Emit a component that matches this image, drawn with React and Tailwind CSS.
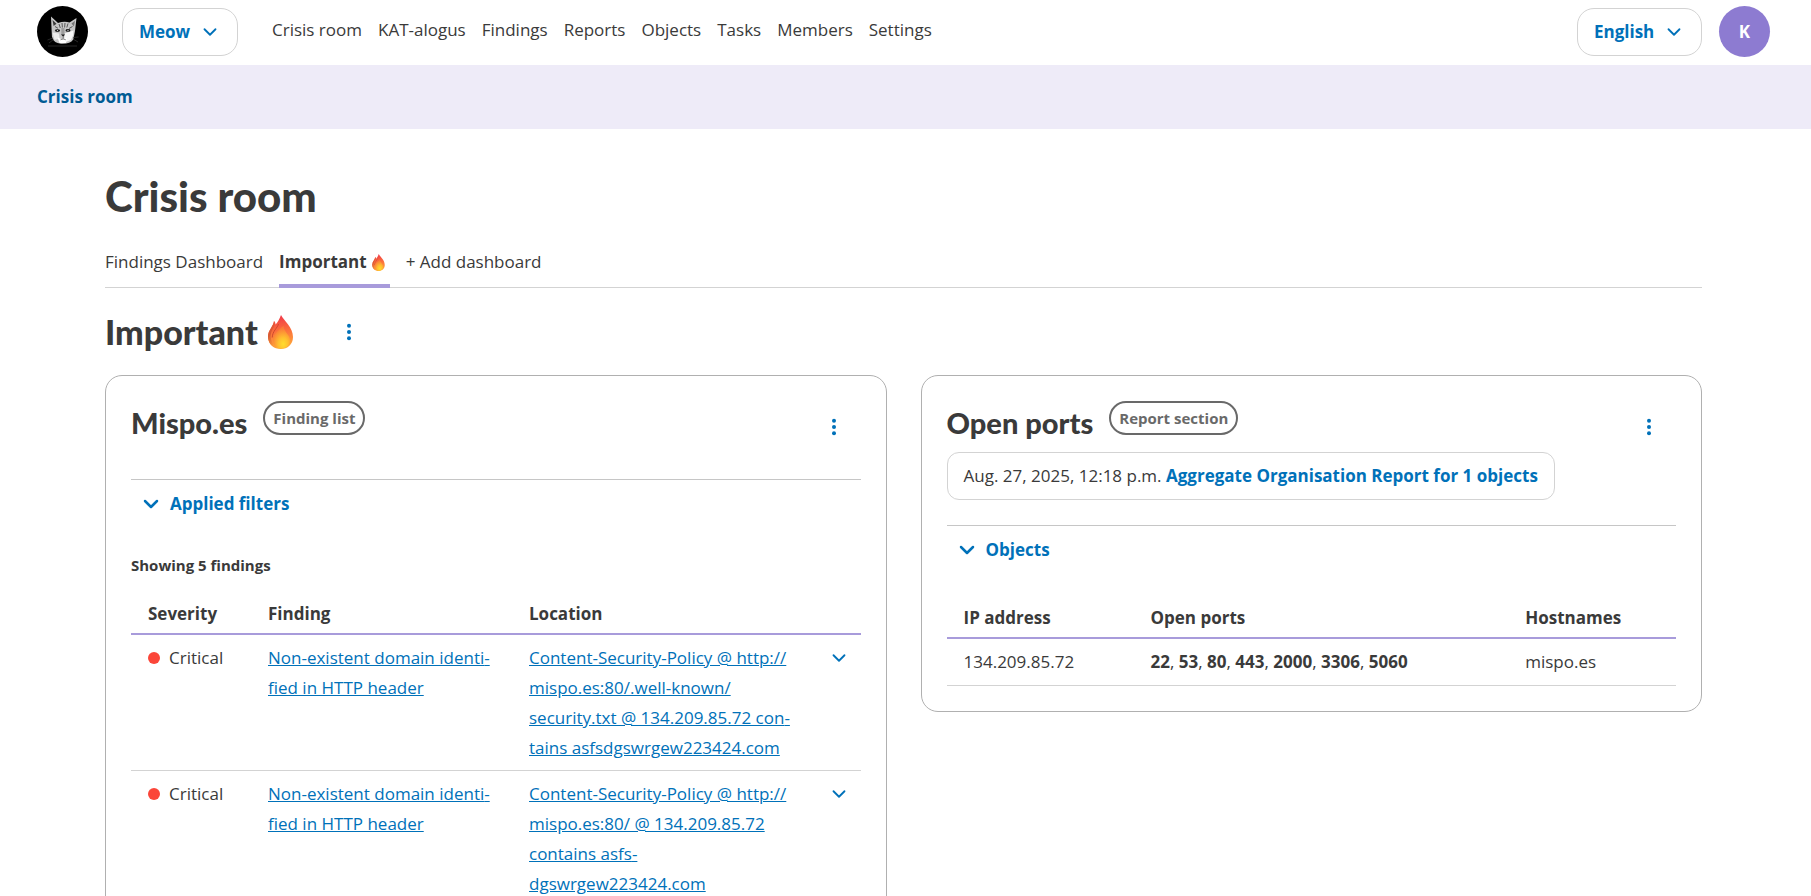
import { Fragment, useState } from "react";
import { ChevronDown } from "lucide-react";

const NAV_ITEMS = [
  "Crisis room",
  "KAT-alogus",
  "Findings",
  "Reports",
  "Objects",
  "Tasks",
  "Members",
  "Settings",
];

// \u00AD marks the places where long words may be hyphenated,
// locations are split where a URL may wrap
const FINDINGS = [
  {
    id: 1,
    severity: "Critical",
    finding: "Non-existent domain identi\u00ADfied in HTTP header",
    location: [
      "Content-Security-Policy @ http://",
      "mispo.es:80/.well-known/",
      "security.txt @ 134.209.85.72 con\u00ADtains asfs\u00ADdgswrgew223424.com",
    ],
  },
  {
    id: 2,
    severity: "Critical",
    finding: "Non-existent domain identi\u00ADfied in HTTP header",
    location: [
      "Content-Security-Policy @ http://",
      "mispo.es:80/ @ 134.209.85.72 con\u00ADtains asfs\u00ADdgswrgew223424.com",
    ],
  },
];

const HOSTS = [
  {
    ip: "134.209.85.72",
    ports: [22, 53, 80, 443, 2000, 3306, 5060],
    hostname: "mispo.es",
  },
];

function CatLogo() {
  return (
    <svg viewBox="0 0 51 51" className="size-[51px]" role="img" aria-label="Meow">
      <circle cx="25.5" cy="25.5" r="25.5" fill="#000" />
      {/* Head and ears */}
      <path
        d="M14 10.5 L14.6 24 L15 31 Q16.500 37 24 37.800 Q33 38.200 36.300 33.500 L38 25 L39.500 12 L32.500 16.500 Q27 15 21 17 Z"
        fill="#c6c6c6"
      />
      <path d="M15.500 14 L16.600 20 L19.500 17.800 Z" fill="#3a3a3a" />
      <path d="M38 14.800 L34.500 17.600 L36.900 20.500 Z" fill="#777" />
      {/* Forehead stripes */}
      <path
        d="M22 18 L23.300 22 M25 17 L25.400 21.500 M28 17 L27.600 21.500 M31 17.500 L29.800 21.500 M18 20.500 L21 22.300 M35.500 20.500 L32 22.500"
        stroke="#4a4a4a"
        strokeWidth="0.9"
        fill="none"
      />
      {/* Cheeks and muzzle */}
      <path d="M27.500 27.500 L36.500 24.500 L36.300 29 L34 34 L27 36.500 Z" fill="#f7f7f7" />
      <path d="M15.500 26.500 L22 27.500 L22.500 32.500 L17.500 34 Z" fill="#ececec" />
      <path d="M20.500 31.500 L25.500 33.500 L30 31.500 L29 37 L22.500 37 Z" fill="#fff" />
      <path d="M24.300 22 L27.500 22 L27.500 29 L24.300 29 Z" fill="#9c9c9c" />
      {/* Eyes, nose and mouth */}
      <ellipse cx="20.500" cy="24.600" rx="2.600" ry="1.400" fill="#161616" />
      <ellipse cx="31" cy="24.400" rx="2.500" ry="1.300" fill="#161616" />
      <circle cx="20.500" cy="24.600" r="0.700" fill="#ddd" />
      <circle cx="31" cy="24.400" r="0.600" fill="#ddd" />
      <path d="M24 28.500 L28 28.500 L26.200 30.700 Z" fill="#1c1c1c" />
      <path d="M26.200 30.500 V32.200 M23.500 33.800 Q26 32 28.800 33.800" stroke="#555" strokeWidth="0.7" fill="none" />
      {/* Whiskers */}
      <path
        d="M16 32 L10.500 34 M16.500 33.500 L12 37 M36 31.500 L41.500 31 M36 33 L41 36 M11 40 H40"
        stroke="#3a3a3a"
        strokeWidth="0.7"
        fill="none"
      />
    </svg>
  );
}

function Flame({ className, id }) {
  return (
    <svg viewBox="0 0 25 34" className={className} aria-hidden="true">
      <defs>
        <linearGradient id={`${id}-outer`} x1="0.5" y1="0" x2="0.6" y2="1">
          <stop offset="0" stopColor="#f0384a" />
          <stop offset="0.45" stopColor="#fb6d3c" />
          <stop offset="1" stopColor="#ffb03a" />
        </linearGradient>
        <linearGradient id={`${id}-side`} x1="0" y1="0" x2="0.4" y2="1">
          <stop offset="0" stopColor="#f4503c" />
          <stop offset="0.5" stopColor="#d65a33" />
          <stop offset="1" stopColor="#ff9a3a" />
        </linearGradient>
        <radialGradient id={`${id}-inner`} cx="0.6" cy="0.8" r="0.7">
          <stop offset="0" stopColor="#ffdc2e" />
          <stop offset="0.4" stopColor="#ffc02f" />
          <stop offset="1" stopColor="#fb7a38" />
        </radialGradient>
      </defs>
      <path
        d="M6 6 C7 7 7.500 8 7.600 9.500 C10 7 11.500 4 13 0 C16 6 25 12 25 22 C25 29.500 19.500 34 12.800 34 C6 34 0 29.500 0 21.500 C0 15 5.500 11.500 6 6 Z"
        fill={`url(#${id}-outer)`}
      />
      <path
        d="M6 6 C7 8 6.500 10 5.500 12.500 C3 17 1.500 21 4 27 C5 29.500 6.500 31.500 8.500 33 C3.500 31.500 0 27.500 0 21.500 C0 15 5.500 11.500 6 6 Z"
        fill={`url(#${id}-side)`}
      />
      <path
        d="M15.500 11 C11 14.500 5 19 5 25.500 C5 30.500 8.500 33.500 13 33.500 C18.500 33.500 22 30 22 25 C22 20 16 17 15.500 11 Z"
        fill={`url(#${id}-inner)`}
      />
      <path d="M10.500 9 C9.500 13 4.500 16 4.200 22.500" stroke="#c8452c" strokeWidth="0.9" fill="none" />
    </svg>
  );
}

function MenuButton({ label }) {
  return (
    <button type="button" aria-label={label} className="text-[#0071b9] cursor-pointer">
      <svg viewBox="0 0 22 22" className="size-[22px]" fill="currentColor">
        <circle cx="11" cy="4.7" r="2" />
        <circle cx="11" cy="11" r="2" />
        <circle cx="11" cy="17.3" r="2" />
      </svg>
    </button>
  );
}

function HeaderSelect({ label, value }) {
  return (
    <div className="relative">
      <select
        aria-label={label}
        defaultValue={value}
        className="block h-12 appearance-none rounded-[17px] border border-[#d3d3d3] bg-white pl-4 pr-[46px] font-bold text-[#0071b9]"
      >
        <option>{value}</option>
      </select>
      <ChevronDown
        size={22}
        className="pointer-events-none absolute right-[17px] top-[13px] text-[#0071b9]"
      />
    </div>
  );
}

function Badge({ children }) {
  return (
    <span className="flex h-[34px] items-center rounded-full border-2 border-[#696969] px-2 text-[15px] font-bold text-[#696969]">
      {children}
    </span>
  );
}

function CardHeader({ title, badge }) {
  return (
    <div className="flex h-[51px] items-start">
      <h3 className="font-[Lato,sans-serif] text-[29px] leading-[44px] font-black">{title}</h3>
      <div className="ml-4">
        <Badge>{badge}</Badge>
      </div>
      <div className="ml-auto mr-4 mt-[15px]">
        <MenuButton label={`${title} menu`} />
      </div>
    </div>
  );
}

function Disclosure({ children }) {
  const [open, setOpen] = useState(false);
  return (
    <button
      type="button"
      aria-expanded={open}
      onClick={() => setOpen(!open)}
      className="flex h-12 w-full items-center gap-[7px] pl-2 font-bold text-[#0071b9] cursor-pointer"
    >
      <ChevronDown size={24} strokeWidth={2.5} className={open ? "rotate-180" : ""} />
      {children}
    </button>
  );
}

function FindingsTable() {
  return (
    <table className="mt-[9px] w-full table-fixed text-left">
      <thead>
        <tr className="border-b-2 border-[#a89bdb]">
          <th className="w-[120px] px-[17px] pt-3 pb-1">Severity</th>
          <th className="w-[261px] px-[17px] pt-3 pb-1">Finding</th>
          <th className="pt-3 pr-2 pb-1 pl-[17px]">Location</th>
          <th className="w-[56px]" aria-label="Details" />
        </tr>
      </thead>
      <tbody>
        {FINDINGS.map((row) => (
          <tr key={row.id} className="border-b border-[#d3d3d3] align-top">
            <td className="pt-2 pb-[7px] pl-[17px]">
              <span className="flex items-center gap-[9px]">
                <span className="size-3 rounded-full bg-[#fb4639]" />
                {row.severity}
              </span>
            </td>
            <td className="px-[17px] pt-2 pb-[7px]">
              <a href="#finding" className="text-[#0071b9] underline">
                {row.finding}
              </a>
            </td>
            <td className="pt-2 pr-2 pb-[7px] pl-[17px]">
              <a href="#location" className="text-[#0071b9] underline">
                {row.location.map((part) => (
                  <Fragment key={part}>
                    {part}
                    <wbr />
                  </Fragment>
                ))}
              </a>
            </td>
            <td className="pt-2 pr-[11px] pb-[7px]">
              <button
                type="button"
                aria-label="Show details"
                className="ml-auto flex h-[30px] items-center text-[#0071b9] cursor-pointer"
              >
                <ChevronDown size={22} />
              </button>
            </td>
          </tr>
        ))}
      </tbody>
    </table>
  );
}

function PortsTable() {
  return (
    <table className="mt-[17px] w-full table-fixed text-left">
      <thead>
        <tr className="border-b-2 border-[#a89bdb]">
          <th className="w-[187px] px-[17px] pt-3 pb-1">IP address</th>
          <th className="px-[17px] pt-3 pb-1">Open ports</th>
          <th className="w-[23%] px-[17px] pt-3 pb-1">Hostnames</th>
        </tr>
      </thead>
      <tbody>
        {HOSTS.map((host) => (
          <tr key={host.ip} className="border-b border-[#d3d3d3]">
            <td className="px-[17px] py-2">{host.ip}</td>
            <td className="px-[17px] py-2">
              {host.ports.map((port, i) => (
                <span key={port}>
                  {i > 0 && ", "}
                  <b>{port}</b>
                </span>
              ))}
            </td>
            <td className="px-[17px] py-2">{host.hostname}</td>
          </tr>
        ))}
      </tbody>
    </table>
  );
}

export default function App() {
  return (
    <div className="h-screen overflow-hidden bg-white font-['Open_Sans',sans-serif] text-[17px] leading-[30px] text-[#3a3a3a]">
      {/* Top bar */}
      <header className="flex items-center pt-1.5 pr-[41px] pb-2 pl-[37px]">
        <a href="#home">
          <CatLogo />
        </a>
        <div className="ml-[34px]">
          <HeaderSelect label="Organisation" value="Meow" />
        </div>
        <nav className="mb-1 ml-[34px] flex gap-4">
          {NAV_ITEMS.map((item) => (
            <a key={item} href="#nav">
              {item}
            </a>
          ))}
        </nav>
        <div className="ml-auto flex items-center gap-[17px]">
          <HeaderSelect label="Language" value="English" />
          <button
            type="button"
            className="size-[51px] rounded-full bg-[#8d7bd1] font-bold text-white cursor-pointer"
          >
            K
          </button>
        </div>
      </header>

      {/* Breadcrumb */}
      <div className="flex h-16 items-center bg-[#eeebf8] pl-[37px]">
        <a href="#crisis-room" className="font-bold text-[#005b94]">
          Crisis room
        </a>
      </div>

      <main className="pt-10 pr-[109px] pl-[105px]">
        <h1 className="font-[Lato,sans-serif] text-[42px] leading-[54px] font-black">Crisis room</h1>

        {/* Dashboard tabs */}
        <nav className="mt-[19px] flex gap-4 border-b border-[#d3d3d3]">
          <a href="#findings" className="pt-[5px] pb-2.5">
            Findings Dashboard
          </a>
          <a
            href="#important"
            className="-mb-px flex items-center gap-[5px] border-b-4 border-[#a89bdb] pt-[5px] pr-[5px] pb-[7px] font-bold"
          >
            Important
            <Flame id="tab" className="h-[17px] w-[13px]" />
          </a>
          <a href="#add" className="pt-[5px] pb-2.5">
            + Add dashboard
          </a>
        </nav>

        <div className="mt-[21px] flex items-center">
          <h2 className="flex items-center gap-2.5 font-[Lato,sans-serif] text-[34px] leading-[46px] font-black">
            Important
            <Flame id="heading" className="h-[34px] w-[25px]" />
          </h2>
          <div className="ml-[45px] flex">
            <MenuButton label="Dashboard menu" />
          </div>
        </div>

        <div className="mt-5 grid grid-cols-2 items-start gap-[34px]">
          <section className="rounded-[17px] border border-[#b0b0b0] p-[25px]">
            <CardHeader title="Mispo.es" badge="Finding list" />
            <div className="mt-[27px] border-t border-[#c6c6c6]">
              <Disclosure>Applied filters</Disclosure>
            </div>
            <p className="mt-6 text-[15px] leading-[26px] font-bold">Showing 5 findings</p>
            <FindingsTable />
          </section>

          <section className="rounded-[17px] border border-[#b0b0b0] p-[25px]">
            <CardHeader title="Open ports" badge="Report section" />
            <p className="w-fit rounded-xl border border-[#d3d3d3] px-4 py-2">
              Aug. 27, 2025, 12:18 p.m.{" "}
              <a href="#report" className="font-bold text-[#0071b9]">
                Aggregate Organisation Report for 1 objects
              </a>
            </p>
            <div className="mt-[25px] border-t border-[#c6c6c6]">
              <Disclosure>Objects</Disclosure>
            </div>
            <PortsTable />
          </section>
        </div>
      </main>
    </div>
  );
}
